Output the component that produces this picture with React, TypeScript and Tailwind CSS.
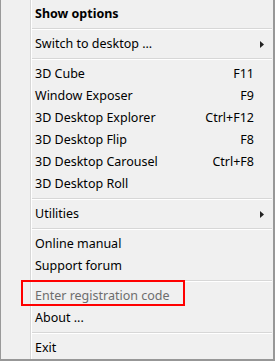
import React from 'react'

type Item =
  | { kind: 'sep' }
  | { kind: 'item'; label: string; shortcut?: string; bold?: boolean; submenu?: boolean; disabled?: boolean }

const items: Item[] = [
  { kind: 'item', label: 'Show options', bold: true },
  { kind: 'sep' },
  { kind: 'item', label: 'Switch to desktop ...', submenu: true },
  { kind: 'sep' },
  { kind: 'item', label: '3D Cube', shortcut: 'F11' },
  { kind: 'item', label: 'Window Exposer', shortcut: 'F9' },
  { kind: 'item', label: '3D Desktop Explorer', shortcut: 'Ctrl+F12' },
  { kind: 'item', label: '3D Desktop Flip', shortcut: 'F8' },
  { kind: 'item', label: '3D Desktop Carousel', shortcut: 'Ctrl+F8' },
  { kind: 'item', label: '3D Desktop Roll' },
  { kind: 'sep' },
  { kind: 'item', label: 'Utilities', submenu: true },
  { kind: 'sep' },
  { kind: 'item', label: 'Online manual' },
  { kind: 'item', label: 'Support forum' },
  { kind: 'sep' },
  { kind: 'item', label: 'Enter registration code', disabled: true },
  { kind: 'item', label: 'About ...' },
  { kind: 'sep' },
  { kind: 'item', label: 'Exit' },
]

function SubArrow() {
  return (
    <svg width="4" height="7" viewBox="0 0 4 7" className="ml-[6px]">
      <path d="M0 0 L4 3.5 L0 7 Z" fill="#222" />
    </svg>
  )
}

export default function App() {
  return (
    <div
      className="relative w-[275px] h-[361px] bg-[#f0f0f0] border-l border-l-[#999] border-r-2 border-r-[#979797] border-b-2 border-b-[#979797] flex text-[12.5px] text-black"
      style={{ fontFamily: '"Noto Sans", "Liberation Sans", sans-serif' }}
    >
      {/* left icon gutter */}
      <div className="w-[29px] shrink-0" />
      <div className="w-px bg-[#d7d7d7]" />
      <div className="w-px bg-white" />

      {/* menu entries */}
      <div className="flex-1 flex flex-col pt-[3px]">
        {items.map((it, i) =>
          it.kind === 'sep' ? (
            <div key={i} className="h-[8px] flex items-center pr-px">
              <div className="w-full border-t border-t-[#d7d7d7] border-b border-b-white" />
            </div>
          ) : (
            <div key={i} className="h-[22px] flex items-center pl-[3px]">
              <span
                className={`flex-1 whitespace-nowrap ${it.bold ? 'font-bold' : ''} ${
                  it.disabled ? 'text-[#6d6d6d]' : ''
                }`}
              >
                {it.label}
              </span>
              {it.shortcut && <span className="whitespace-nowrap">{it.shortcut}</span>}
              <div className="w-[19px] shrink-0 flex items-center">{it.submenu && <SubArrow />}</div>
            </div>
          )
        )}
      </div>

      {/* annotation box */}
      <div className="absolute left-[20px] top-[280px] w-[164px] h-[26px] border-2 border-[#ff0000]" />
    </div>
  )
}
